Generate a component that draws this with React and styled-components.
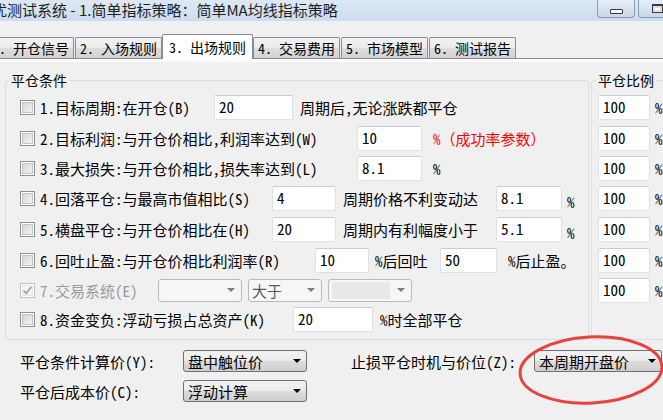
import React from "react";
import styled, { createGlobalStyle } from "styled-components";

const UI = `"Noto Sans Mono CJK SC", "Noto Sans CJK SC", "Liberation Mono", monospace`;

const GlobalStyle = createGlobalStyle`
  html, body { margin: 0; padding: 0; background: #f0f0f0; }
  body { font-family: ${UI}; font-size: 15px; color: #000; }
  * { box-sizing: border-box; }
`;

const Window = styled.div`
  width: 663px;
  height: 420px;
  overflow: hidden;
  position: relative;
  background: #f0f0f0;
`;

const TitleBar = styled.div`
  height: 21px;
  display: flex;
  align-items: flex-start;
  background: linear-gradient(#dde8f4, #cddcee);
  overflow: hidden;
`;

const TitleText = styled.div`
  flex: 1;
  min-width: 0;
  margin-left: -8px;
  white-space: nowrap;
  overflow: hidden;
  font-family: "Noto Sans CJK SC", sans-serif;
  font-size: 15px;
  line-height: 19px;
  color: #1f1f1f;
`;

const WinButtons = styled.div`
  display: flex;
  gap: 3px;
  margin-right: -13px;
  flex-shrink: 0;
`;

const WinButton = styled.div`
  width: 38px;
  height: 18px;
  border: 1px solid #8a9cb2;
  border-top: none;
  border-radius: 0 0 4px 4px;
  background: linear-gradient(#e6eef8, #c9d7e8);
  display: flex;
  justify-content: center;
  align-items: ${(p) => (p.$low ? "flex-end" : "center")};
  padding-bottom: ${(p) => (p.$low ? 3 : 0)}px;
`;

const MinIcon = styled.span`
  width: 13px;
  height: 5px;
  border: 1px solid #3a3a3a;
  background: #fff;
  border-radius: 1px;
`;

const MaxIcon = styled.span`
  width: 11px;
  height: 9px;
  border: 1px solid #3a3a3a;
  border-top-width: 2px;
  background: #fff;
  box-shadow: inset 0 0 0 2px #d9e2ec;
`;

const TabStrip = styled.div`
  margin: 14px 0 0 -13px;
  height: 24px;
  display: flex;
  align-items: flex-end;
  gap: 1px;
  border-bottom: 1px solid #898c95;
`;

const Tab = styled.div`
  height: ${(p) => (p.$active ? 25 : 21)}px;
  margin: 0 ${(p) => (p.$active ? -1 : 0)}px ${(p) => (p.$active ? -1 : 0)}px;
  padding: ${(p) => (p.$active ? 3 : 1)}px ${(p) => (p.$active ? 6 : 4)}px 0;
  border: 1px solid #898c95;
  border-bottom: none;
  border-radius: 2px 2px 0 0;
  background: ${(p) =>
    p.$active ? "#fff" : "linear-gradient(#f3f3f3, #ebebeb 50%, #dddddd 50%, #d3d3d3)"};
  font-size: 14px;
  line-height: 18px;
  white-space: nowrap;
  position: relative;
  z-index: ${(p) => (p.$active ? 1 : 0)};
`;

const Panel = styled.div`
  border-top: 3px solid #fbfbfb;
`;

const Groups = styled.div`
  display: flex;
  padding-left: 5px;
  margin-top: 9px;
`;

const Group = styled.fieldset`
  margin: 0;
  width: ${(p) => (p.$w ? `${p.$w}px` : "auto")};
  flex: ${(p) => (p.$w ? "none" : 1)};
  margin-left: ${(p) => p.$ml || 0}px;
  margin-right: ${(p) => p.$mr || 0}px;
  min-width: 0;
  border: 1px solid #d5dfe5;
  border-radius: 3px;
  padding: 3px 0 5px 0;
`;

const Legend = styled.legend`
  margin-left: ${(p) => p.$ml}px;
  padding: 0 2px;
  font-size: 14px;
  line-height: 18px;
`;

const GroupBody = styled.div`
  padding-left: ${(p) => p.$pl}px;
`;

const Row = styled.div`
  height: ${(p) => p.$h}px;
  display: flex;
  align-items: center;
  white-space: nowrap;
`;

const CheckBox = styled.span`
  width: 15px;
  height: 15px;
  flex-shrink: 0;
  margin-right: 5px;
  border: 1px solid ${(p) => (p.$disabled ? "#c2c2c2" : "#8e8f8f")};
  background: ${(p) =>
    p.$disabled ? "#f4f4f4" : "linear-gradient(135deg, #cfd1d4, #f8f8f8)"};
  box-shadow: inset 0 0 0 1px #fff, inset 0 0 0 2px ${(p) => (p.$disabled ? "#e6e6e6" : "#c3c6c9")};
  display: flex;
  align-items: center;
  justify-content: center;
`;

const Label = styled.span`
  width: ${(p) => (p.$w ? `${p.$w}px` : "auto")};
  flex-shrink: 0;
  margin-left: ${(p) => p.$ml || 0}px;
  padding-top: ${(p) => p.$pt || 0}px;
  color: ${(p) => (p.$red ? "#ff0000" : p.$disabled ? "#9a9a9a" : "#000")};
`;

const TextBox = styled.input.attrs({ readOnly: true, type: "text" })`
  width: ${(p) => p.$w}px;
  height: 25px;
  flex-shrink: 0;
  margin: 0;
  border: 1px solid #dde1e6;
  border-top-color: #c9cdd3;
  border-radius: 2px;
  background: #fff;
  font-family: ${UI};
  font-size: 15px;
  color: #000;
  padding: 0 0 2px 4px;
  outline: none;
`;

const Combo = styled.div`
  width: ${(p) => p.$w}px;
  height: 23px;
  flex-shrink: 0;
  margin-left: ${(p) => p.$ml || 0}px;
  border: 1px solid #bababa;
  border-radius: 3px;
  background: #f6f6f6;
  display: flex;
  align-items: center;
  padding: 0 6px 0 3px;
  color: #5a5a5a;
`;

const ComboInner = styled.span`
  width: 58px;
  height: 17px;
  background: #e9e9e9;
`;

const Arrow = styled.span`
  margin-left: auto;
  width: 0;
  height: 0;
  border-left: 4px solid transparent;
  border-right: 4px solid transparent;
  border-top: 4px solid ${(p) => p.$color || "#7d7d7d"};
`;

const Bottom = styled.div`
  display: flex;
  align-items: flex-start;
  padding: 10px 0 0 20px;
`;

const BottomCol = styled.div`
  display: flex;
  flex-direction: column;
  gap: 8px;
`;

const FieldRow = styled.div`
  display: flex;
  align-items: center;
  height: 22px;
  margin-left: ${(p) => p.$ml || 0}px;
  white-space: nowrap;
`;

const DropDown = styled.div`
  width: ${(p) => p.$w}px;
  height: 22px;
  flex-shrink: 0;
  border: 1px solid #707070;
  border-radius: 3px;
  background: linear-gradient(#f2f2f2, #ebebeb 50%, #dddddd 50%, #cfcfcf);
  display: flex;
  align-items: center;
  padding: 0 5px 0 4px;
`;

const Mark = styled.svg`
  position: absolute;
  left: 517px;
  top: 334px;
  pointer-events: none;
`;

const rowHeights = [31, 30, 30, 31, 31, 31, 28, 30];

const Check = ({ disabled, checked }) => (
  <CheckBox $disabled={disabled}>
    {checked && (
      <svg width="11" height="11" viewBox="0 0 11 11">
        <path d="M1.5 5.5 L4.2 8.3 L9.5 1.8" fill="none" stroke="#a5a5a5" strokeWidth="1.8" />
      </svg>
    )}
  </CheckBox>
);

export default function App() {
  const tabs = ["1. 开仓信号", "2. 入场规则", "3. 出场规则", "4. 交易费用", "5. 市场模型", "6. 测试报告"];

  return (
    <Window>
      <GlobalStyle />
      <TitleBar>
        <TitleText>优测试系统 - 1.简单指标策略：简单MA均线指标策略</TitleText>
        <WinButtons>
          <WinButton $low>
            <MinIcon />
          </WinButton>
          <WinButton>
            <MaxIcon />
          </WinButton>
        </WinButtons>
      </TitleBar>

      <TabStrip>
        {tabs.map((t, i) => (
          <Tab key={t} $active={i === 2}>
            {t}
          </Tab>
        ))}
      </TabStrip>

      <Panel>
        <Groups>
          <Group $w={584}>
            <Legend $ml={3}>平仓条件</Legend>
            <GroupBody $pl={14}>
              <Row $h={rowHeights[0]}>
                <Check />
                <Label $w={174}>1.目标周期:在开仓(B)</Label>
                <TextBox $w={79} defaultValue="20" />
                <Label $ml={7}>周期后,无论涨跌都平仓</Label>
              </Row>
              <Row $h={rowHeights[1]}>
                <Check />
                <Label $w={317}>2.目标利润:与开仓价相比,利润率达到(W)</Label>
                <TextBox $w={65} defaultValue="10" />
                <Label $ml={11} $red>%（成功率参数）</Label>
              </Row>
              <Row $h={rowHeights[2]}>
                <Check />
                <Label $w={317}>3.最大损失:与开仓价相比,损失率达到(L)</Label>
                <TextBox $w={65} defaultValue="8.1" />
                <Label $ml={11}>%</Label>
              </Row>
              <Row $h={rowHeights[3]}>
                <Check />
                <Label $w={232}>4.回落平仓:与最高市值相比(S)</Label>
                <TextBox $w={64} defaultValue="4" />
                <Label $w={153} $ml={7}>周期价格不利变动达</Label>
                <TextBox $w={66} defaultValue="8.1" />
                <Label $ml={5} $pt={5}>%</Label>
              </Row>
              <Row $h={rowHeights[4]}>
                <Check />
                <Label $w={232}>5.横盘平仓:与开仓价相比在(H)</Label>
                <TextBox $w={64} defaultValue="20" />
                <Label $w={153} $ml={7}>周期内有利幅度小于</Label>
                <TextBox $w={66} defaultValue="5.1" />
                <Label $ml={5} $pt={5}>%</Label>
              </Row>
              <Row $h={rowHeights[5]}>
                <Check />
                <Label $w={275}>6.回吐止盈:与开仓价相比利润率(R)</Label>
                <TextBox $w={54} defaultValue="10" />
                <Label $w={65} $ml={6}>%后回吐</Label>
                <TextBox $w={57} defaultValue="50" />
                <Label $ml={11}>%后止盈。</Label>
              </Row>
              <Row $h={rowHeights[6]}>
                <Check disabled checked />
                <Label $w={118} $disabled>7.交易系统(E)</Label>
                <Combo $w={84}>
                  <Arrow />
                </Combo>
                <Combo $w={74} $ml={6}>
                  大于
                  <Arrow />
                </Combo>
                <Combo $w={84} $ml={6}>
                  <ComboInner />
                  <Arrow />
                </Combo>
              </Row>
              <Row $h={rowHeights[7]}>
                <Check />
                <Label $w={253}>8.资金变负:浮动亏损占总资产(K)</Label>
                <TextBox $w={80} defaultValue="20" />
                <Label $ml={7}>%时全部平仓</Label>
              </Row>
            </GroupBody>
          </Group>

          <Group $ml={2} $mr={-12}>
            <Legend $ml={4}>平仓比例</Legend>
            <GroupBody $pl={6}>
              {rowHeights.slice(0, 7).map((h, i) => (
                <Row key={i} $h={h}>
                  <TextBox $w={52} defaultValue="100" />
                  <Label $ml={5}>%</Label>
                </Row>
              ))}
              <Row $h={rowHeights[7]} />
            </GroupBody>
          </Group>
        </Groups>

        <Bottom>
          <BottomCol>
            <FieldRow>
              <Label $w={163}>平仓条件计算价(Y):</Label>
              <DropDown $w={124}>
                盘中触位价
                <Arrow $color="#000" />
              </DropDown>
            </FieldRow>
            <FieldRow>
              <Label $w={163}>平仓后成本价(C):</Label>
              <DropDown $w={124}>
                浮动计算
                <Arrow $color="#000" />
              </DropDown>
            </FieldRow>
          </BottomCol>
          <FieldRow $ml={44}>
            <Label $w={183}>止损平仓时机与价位(Z):</Label>
            <DropDown $w={128}>
              本周期开盘价
              <Arrow $color="#000" />
            </DropDown>
          </FieldRow>
        </Bottom>
      </Panel>

      <Mark width="148" height="74" viewBox="0 0 148 74">
        <ellipse cx="74" cy="36" rx="71" ry="33" fill="none" stroke="#e8423c" strokeWidth="3" transform="rotate(-3 74 36)" />
      </Mark>
    </Window>
  );
}
